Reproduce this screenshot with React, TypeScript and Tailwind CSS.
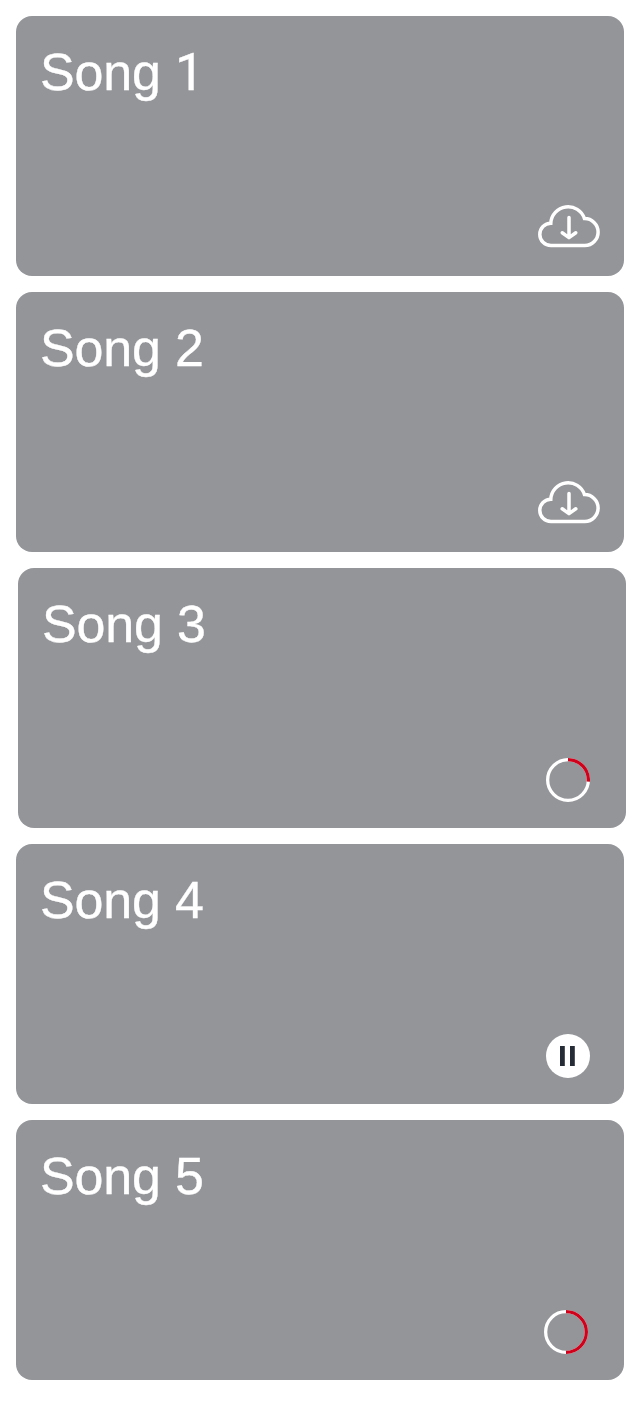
import React from "react";

type State = "download" | "quarter" | "pause" | "half";

const songs: { number: number; state: State }[] = [
  { number: 1, state: "download" },
  { number: 2, state: "download" },
  { number: 3, state: "quarter" },
  { number: 4, state: "pause" },
  { number: 5, state: "half" },
];

const insets: Record<State, string> = {
  download: "pr-[23px]",
  quarter: "ml-0.5 pr-9",
  pause: "pr-[34px]",
  half: "pr-9",
};

function Cloud() {
  return (
    <svg width="64" height="46" viewBox="0 0 64 46" fill="none" stroke="white" strokeWidth="3.5" strokeLinecap="round" strokeLinejoin="miter">
      <path d="M13.8 19.2C7.6 19.2 2.8 24.2 2.8 30.4C2.8 36.6 7.8 41.5 14 41.5H47.8A13.45 13.45 0 0 0 47.5 14.6A17.3 17.3 0 0 0 13.8 19.2Z" />
      <path d="M32 13.6V33M25.2 28.8L32 33.6L38.8 28.8" strokeLinejoin="round" />
    </svg>
  );
}

function Progress({ arc }: { arc: string }) {
  return (
    <svg width="44" height="44" viewBox="0 0 44 44" fill="none" strokeWidth="3.3">
      <circle cx="22" cy="22" r="20.35" stroke="white" />
      <path d={arc} stroke="#d0021b" />
    </svg>
  );
}

function Pause() {
  return (
    <svg width="44" height="44" viewBox="0 0 44 44">
      <circle cx="22" cy="22" r="22" fill="white" />
      <path d="M14 12h4.8v20H14zM24 12h4.8v20H24z" fill="#262c36" />
    </svg>
  );
}

export default function App() {
  return (
    <main className="flex h-[1402px] w-[640px] flex-col gap-4 bg-white p-4">
      {songs.map(({ number, state }) => (
        <section
          key={number}
          className={`flex h-[260px] w-[608px] shrink-0 flex-col justify-between rounded-[16px] bg-[#949599] py-[26px] pl-6 ${insets[state]}`}
        >
          <h2 className="h-[60px] font-['Liberation_Sans',sans-serif] text-[52px] leading-[60px] tracking-[-0.2px] text-white [-webkit-text-stroke:0.35px_white]">
            Song{" "}
            <span className={number === 1 ? "font-['Roboto',sans-serif]" : ""}>{number}</span>
          </h2>
          <div className="flex justify-end">
            {state === "download" && <Cloud />}
            {state === "quarter" && <Progress arc="M22 1.65A20.35 20.35 0 0 1 42.28 23.7" />}
            {state === "half" && <Progress arc="M22 1.65A20.35 20.35 0 0 1 22 42.35" />}
            {state === "pause" && <Pause />}
          </div>
        </section>
      ))}
    </main>
  );
}
